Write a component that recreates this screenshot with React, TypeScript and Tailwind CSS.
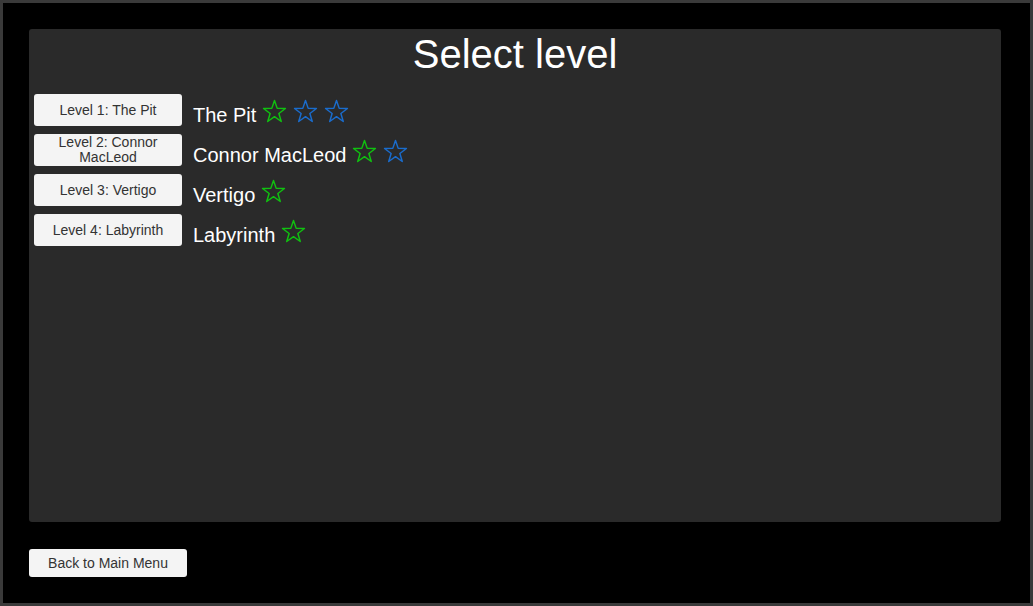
import React from "react";

type Level = { button: string; name: string; stars: ("green" | "blue")[] };

const levels: Level[] = [
  { button: "Level 1: The Pit", name: "The Pit", stars: ["green", "blue", "blue"] },
  { button: "Level 2: Connor MacLeod", name: "Connor MacLeod", stars: ["green", "blue"] },
  { button: "Level 3: Vertigo", name: "Vertigo", stars: ["green"] },
  { button: "Level 4: Labyrinth", name: "Labyrinth", stars: ["green"] },
];

function Star({ color }: { color: "green" | "blue" }) {
  const stroke = color === "green" ? "#10c010" : "#1a6ccc";
  return (
    <svg width="25" height="25" viewBox="0 0 24 24" className="shrink-0">
      <polygon
        points="12,1.5 14.6,9 22.5,9.1 16.2,13.9 18.5,21.6 12,17 5.5,21.6 7.8,13.9 1.5,9.1 9.4,9"
        fill="none"
        stroke={stroke}
        strokeWidth="1.4"
        strokeLinejoin="round"
      />
    </svg>
  );
}

export default function App() {
  return (
    <div
      className="w-[1033px] h-[606px] border-[3px] border-[#3a3a3a] bg-black flex flex-col"
      style={{ fontFamily: "'Liberation Sans', Arial, sans-serif" }}
    >
      {/* Panneau principal */}
      <div className="mt-[26px] ml-[26px] w-[972px] h-[493px] bg-[#2a2a2a] rounded-[3px] flex flex-col">
        <h1 className="text-center text-white text-[40px] leading-none mt-[5px] h-[40px]">
          Select level
        </h1>
        <div className="mt-[20px] ml-[5px] flex flex-col gap-[8px]">
          {levels.map((lvl) => (
            <div key={lvl.button} className="flex items-center h-[32px]">
              <button className="w-[148px] h-[32px] bg-[#f4f4f4] rounded-[3px] text-[14px] leading-[15px] text-[#333] px-2 flex items-center justify-center text-center">
                {lvl.button}
              </button>
              <span className="ml-[11px] text-white text-[20px] leading-none mt-[10px]">
                {lvl.name}
              </span>
              <div className="ml-[6px] flex gap-[6px] mt-[2px]">
                {lvl.stars.map((s, i) => (
                  <Star key={i} color={s} />
                ))}
              </div>
            </div>
          ))}
        </div>
      </div>

      <div className="mt-[27px] ml-[26px]">
        <button className="w-[158px] h-[28px] bg-[#f4f4f4] rounded-[3px] text-[14px] text-[#333] flex items-center justify-center">
          Back to Main Menu
        </button>
      </div>
    </div>
  );
}
